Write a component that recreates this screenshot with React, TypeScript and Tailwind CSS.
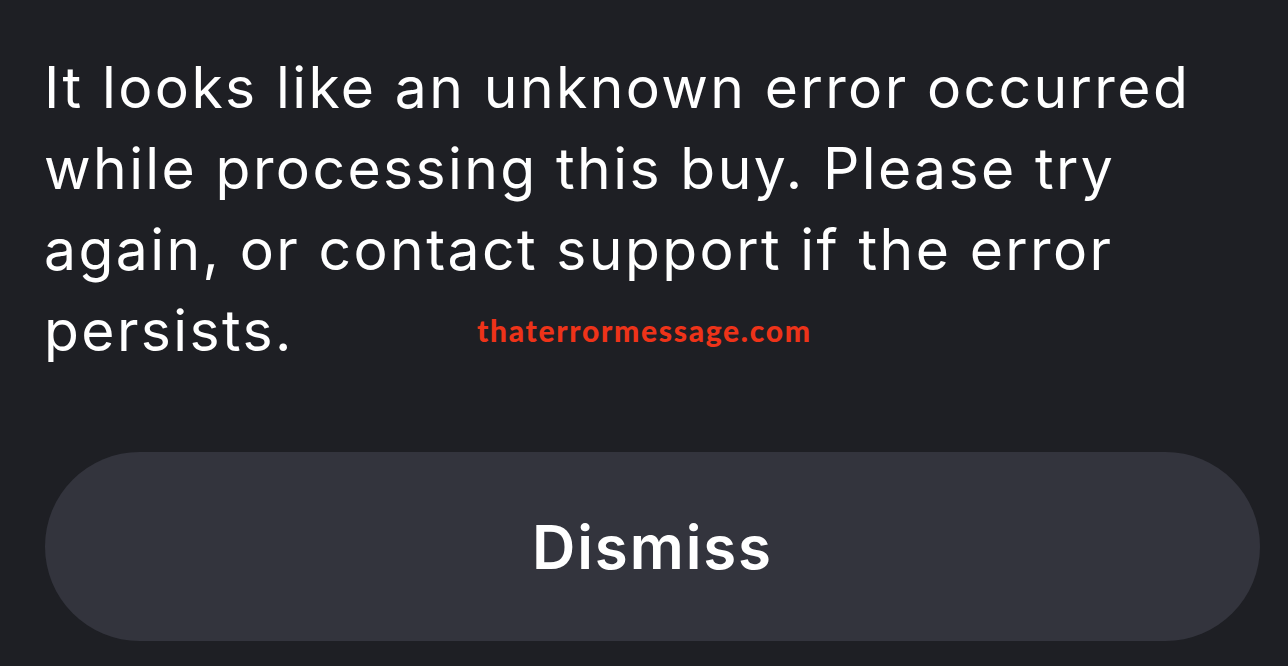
import React from 'react';

const ErrorSheet = () => {
    return (
        <div className="relative w-[1288px] h-[666px] bg-[#1e1f24] overflow-hidden" style={{fontFamily: 'Inter, "Noto Sans", sans-serif'}} >
            <div className="pl-[44px] pr-[20px] pt-[47px]" >
                <p className="text-[57px] leading-[81px] text-white font-normal tracking-[2.4px] whitespace-nowrap" >
                    It looks like an unknown error occurred
                    <br />
                    while processing this buy. Please try
                    <br />
                    again, or contact support if the error
                    <br />
                    persists.
                </p >
            </div >

            <div
                className="absolute left-[477px] top-[315px] text-[30px] leading-[30px] font-black text-[#ee3319] tracking-[1.7px]"
                style={{fontFamily: 'Lato, sans-serif'}} >
                thaterrormessage.com
            </div >

            <div className="pl-[45px] pr-[28px] pt-[81px]" >
                <button className="w-full h-[189px] rounded-full bg-[#33343d] text-white text-[60px] font-semibold tracking-[1.9px]" >
                    Dismiss
                </button >
            </div >
        </div >
    )
};

export default function App() {
    return <ErrorSheet />;
}
